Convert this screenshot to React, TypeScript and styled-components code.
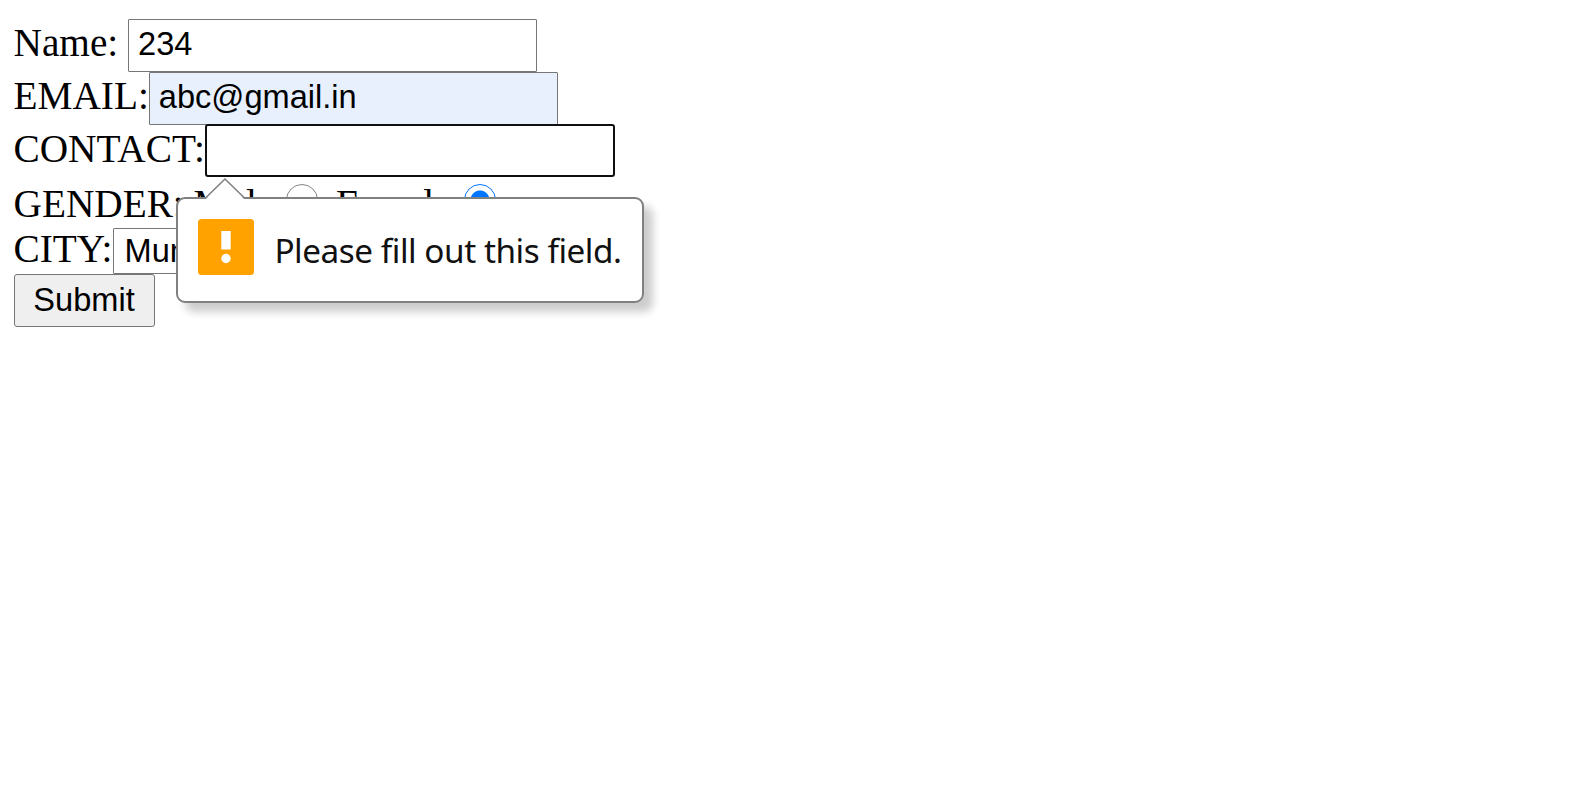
import React from "react";
import styled, { createGlobalStyle } from "styled-components";

const GlobalStyle = createGlobalStyle`
  body {
    margin: 0;
    background: #fff;
    color: #000;
    overflow: hidden;
  }
`;

const Form = styled.form`
  display: flex;
  flex-direction: column;
  padding: 19px 0 0 13.5px;
  font: 39.3px "Liberation Serif", "Times New Roman", serif;
`;

const Row = styled.div<{ $height: number; $line?: number }>`
  display: flex;
  align-items: flex-start;
  height: ${(p) => p.$height}px;
  line-height: ${(p) => p.$line ?? 49}px;
  white-space: pre;
`;

const Field = styled.div`
  position: relative;
  display: flex;
`;

const TextInput = styled.input<{ $filled?: boolean; $active?: boolean }>`
  appearance: none;
  box-sizing: border-box;
  width: ${(p) => (p.$active ? 410 : 409.3)}px;
  height: 53px;
  margin: 0;
  padding: 0 9px 3px;
  border: ${(p) => (p.$active ? "2px solid #101010" : "1px solid #767676")};
  border-radius: ${(p) => (p.$active ? 3 : 1)}px;
  outline: none;
  background: ${(p) => (p.$filled ? "#e8f0fe" : "#fff")};
  color: #000;
  font: 32.6px "Liberation Sans", Arial, sans-serif;
`;

const Radio = styled.input`
  appearance: none;
  box-sizing: border-box;
  width: 32px;
  height: 32px;
  margin: 7px 7.8px 0 12.1px;
  border: 1px solid #858585;
  border-radius: 50%;
  background: #fff;

  &:checked {
    border-color: #0075ff;
    background: radial-gradient(circle, #0075ff 9px, #fff 10px);
  }
`;

const Select = styled.select`
  appearance: none;
  box-sizing: border-box;
  width: 176px;
  height: 46px;
  margin: 0;
  padding: 0 11px 2px;
  border: 1px solid #767676;
  border-radius: 1px;
  background: #fff;
  color: #000;
  font: 32.6px "Liberation Sans", Arial, sans-serif;
`;

const SubmitButton = styled.button`
  box-sizing: border-box;
  width: 141px;
  height: 53px;
  margin: 0;
  padding: 0 0 1px;
  border: 1px solid #767676;
  border-radius: 3px;
  background: #efefef;
  color: #000;
  font: 32.6px "Liberation Sans", Arial, sans-serif;
`;

const Bubble = styled.div`
  position: absolute;
  z-index: 1;
  top: 73px;
  left: -29px;
  box-sizing: border-box;
  display: flex;
  align-items: flex-start;
  width: 468px;
  height: 106px;
  padding: 20px 0 0 20px;
  border: 2px solid #808080;
  border-radius: 9px;
  background: #fff;
  box-shadow: 9px 9px 9px rgba(0, 0, 0, 0.2);
`;

const Arrow = styled.svg`
  position: absolute;
  top: -21px;
  left: 26px;
`;

const Message = styled.span`
  margin: 6.5px 0 0 20.5px;
  font: 33.3px/48px "Noto Sans", "Segoe UI", sans-serif;
  letter-spacing: -0.46px;
  color: #111;
`;

export default function App() {
  return (
    <>
      <GlobalStyle />
      <Form>
        <Row $height={53}>
          <span>Name: </span>
          <TextInput defaultValue="234" />
        </Row>
        <Row $height={52}>
          <span>EMAIL:</span>
          <TextInput $filled defaultValue="abc@gmail.in" />
        </Row>
        <Row $height={53} $line={51}>
          <span>CONTACT:</span>
          <Field>
            <TextInput $active />
            <Bubble>
              <Arrow width="42" height="22" viewBox="0 0 42 22">
                <path d="M1 22 L21 1 L41 22 Z" fill="#fff" />
                <path d="M1 20.5 L21 1 L41 20.5" fill="none" stroke="#808080" strokeWidth="1.5" />
              </Arrow>
              <svg width="56" height="56" viewBox="0 0 56 56">
                <rect width="56" height="56" rx="3.5" fill="#ffa200" />
                <path d="M23.3 12 H32.7 V30.5 H23.3 Z" fill="#fff" />
                <circle cx="28" cy="39.5" r="4.7" fill="#fff" />
              </svg>
              <Message>Please fill out this field.</Message>
            </Bubble>
          </Field>
        </Row>
        <Row $height={51} $line={55}>
          <span>GENDER: Male</span>
          <Radio type="radio" name="gender" />
          <span> Female</span>
          <Radio type="radio" name="gender" defaultChecked />
        </Row>
        <Row $height={46} $line={43}>
          <span>CITY:</span>
          <Select>
            <option>Mumbai</option>
          </Select>
        </Row>
        <Row $height={53}>
          <SubmitButton type="button">Submit</SubmitButton>
        </Row>
      </Form>
    </>
  );
}
